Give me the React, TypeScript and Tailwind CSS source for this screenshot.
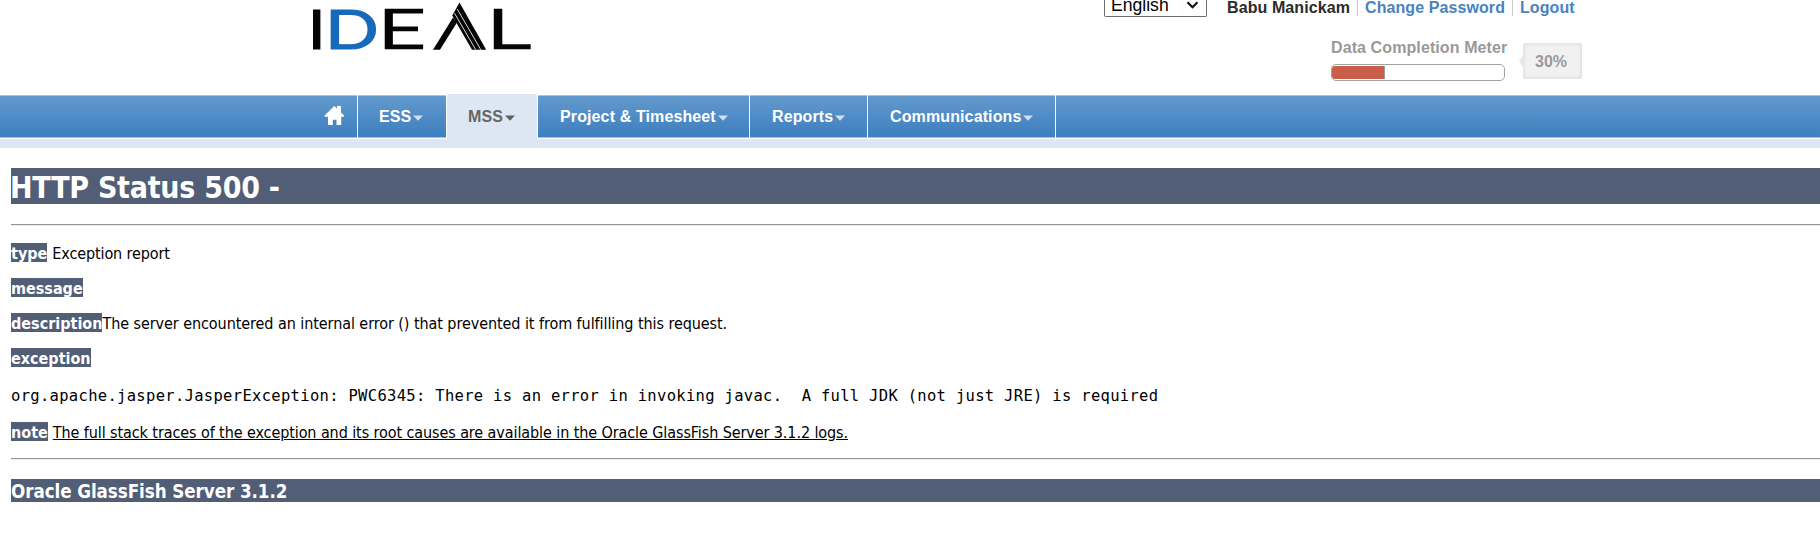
import React from "react";

type NavItem = { label: string; width: string; active?: boolean };

const NAV_ITEMS: NavItem[] = [
  { label: "ESS", width: "w-[89px] pl-[21px]" },
  { label: "MSS", width: "w-[91px] pl-[21px]", active: true },
  { label: "Project & Timesheet", width: "w-[212px] pl-[22px]" },
  { label: "Reports", width: "w-[118px] pl-[22px]" },
  { label: "Communications", width: "w-[188px] pl-[22px]" },
];

const TAHOMA = "font-['DejaVu_Sans_Condensed','DejaVu_Sans',sans-serif] [font-stretch:condensed]";

function Logo() {
  return (
    <svg width="230" height="56" viewBox="0 0 230 56" role="img" aria-label="IDEAL" className="block overflow-visible">
      <g fontFamily="Lato, sans-serif" fontSize="54.5" fill="#050505" stroke="#050505" strokeWidth="1.2">
        <text transform="translate(-2.1 49.1) scale(1.14 1)">I</text>
        <text transform="translate(14.9 49.1) scale(1.296 1)" fill="#1769b9" stroke="#1769b9">D</text>
        <text transform="translate(68.3 48.4) scale(1.53 1)" fontSize="53" fontWeight="300" strokeWidth="2.6">E</text>
        <text transform="translate(176.9 48.4) scale(1.6 1)" fontSize="53" fontWeight="300" strokeWidth="2.6">L</text>
      </g>
      <path d="M123 49.7 143 17.5 147 22.5 130 49.7Z" fill="#050505" />
      <path d="M149.5 2.5 176.2 49.7H162L142.2 15.5Z" fill="#050505" />
      <path d="M147.2 9 170.8 49.7M144.5 13.2 165.7 49.7" stroke="#d8d8d8" strokeWidth="1" fill="none" />
    </svg>
  );
}

function HomeIcon() {
  return (
    <svg width="21" height="20" viewBox="0 0 21 20" className="block" fill="#fff">
      <path d="M10.3 1 13 3.6V1h4v6.4l3.3 3.3-.6 1h-2.5V20h-4.7v-5.2H8.8V20H4v-8.3H1L.4 10.8Z" />
    </svg>
  );
}

function Caret({ active }: { active?: boolean }) {
  return (
    <svg width="10" height="6" viewBox="0 0 10 6" className="mt-[2px] ml-[2px] block shrink-0">
      <path d="M0 .5h10L5 5.7Z" fill={active ? "#5f5f5f" : "#cfe0f1"} />
    </svg>
  );
}

function Header() {
  return (
    <header className="flex h-[94px] pl-[310px] font-['Liberation_Sans',Arial,sans-serif]">
      <Logo />
      <div className="ml-[564px] flex w-[480px] flex-col">
        <div className="flex h-[18px] items-start">
          <div className="flex h-[17px] w-[103px] shrink-0 items-start justify-between rounded-b-[2px] border border-t-0 border-[#6d6d6d] pr-[7px] pl-[6px] text-[17.6px] leading-[20px] text-black">
            <span className="-mt-[5px]">English</span>
            <svg width="13" height="8" viewBox="0 0 13 8" className="mt-[1px]">
              <path d="M1.5 1.3 6.5 6.2 11.5 1.3" fill="none" stroke="#111" strokeWidth="2.2" />
            </svg>
          </div>
          <div className="ml-[20px] flex text-[16px] leading-[16px] font-bold tracking-[0.09px] whitespace-nowrap text-[#4a82bd]">
            <span className="w-[131px] border-r border-[#c9c9c9] text-[#2b2b2b]">Babu Manickam</span>
            <span className="w-[155px] border-r border-[#c9c9c9] pl-[7px]">Change Password</span>
            <span className="pl-[7px]">Logout</span>
          </div>
        </div>
        <div className="mt-[20px] flex pl-[227px] font-bold text-[#999]">
          <div className="w-[174px]">
            <div className="text-[16px] leading-[20px] tracking-[0.1px] whitespace-nowrap">Data Completion Meter</div>
            <div className="mt-[6px] h-[17px] w-[174px] overflow-hidden rounded-[5px] border border-[#a3a3a3] py-px">
              <div className="h-full w-[53px] rounded-l-[3px] border-r border-[#9a9a9a] bg-[#cb5e4b]" />
            </div>
          </div>
          <div className="mt-[5px] ml-[14px] flex h-[36px] items-center">
            <svg width="4" height="12" viewBox="0 0 4 12">
              <path d="M4 0V12L0 6Z" fill="#e6e7e7" />
            </svg>
            <div className="flex h-[36px] w-[59px] items-center justify-center rounded-[2px] bg-[#f1f1f1] pt-px pr-[3px] text-[16px] shadow-[inset_0_0_4px_#cfd2d3]">
              30%
            </div>
          </div>
        </div>
      </div>
    </header>
  );
}

function NavBar() {
  return (
    <nav className="h-[54px] bg-[linear-gradient(to_bottom,transparent_0_1px,#a9c6e0_1px_2px,#6199cd_2px,#3e7fbf_43px,#a9bfd8_43px_44px,#f8fbff_44px_45px,#dde7f3_45px)] font-['Liberation_Sans',Arial,sans-serif] text-[16px] font-bold">
      <div className="flex h-[46px] pl-[324px]">
        <div className="mt-px w-[34px] border-r border-white pt-[10px]">
          <HomeIcon />
        </div>
        {NAV_ITEMS.map(({ label, width, active }) => (
          <div
            key={label}
            className={`flex items-center border-r border-white ${width} ${
              active ? "bg-[#dde7f3] text-[#666]" : "mt-px pb-px text-white"
            }`}
          >
            <span className="tracking-[0.12px] whitespace-nowrap">{label}</span>
            <Caret active={active} />
          </div>
        ))}
      </div>
    </nav>
  );
}

function Label({ children }: { children: string }) {
  return <b className="block h-[19px] bg-[#525d76] tracking-normal text-white">{children}</b>;
}

function ErrorReport() {
  return (
    <main className={`ml-[11px] pt-[20px] text-[16px] leading-[21px] tracking-[-0.08px] text-black ${TAHOMA}`}>
      <h1 className="h-[36px] bg-[#525d76] indent-[-1px] text-[30px] leading-[39px] font-bold tracking-[-0.27px] text-white">
        HTTP Status 500 -
      </h1>
      <hr className="mt-[20px] h-[2px] border-t border-b border-t-[#959595] border-b-[#ececec]" />
      <div className="mt-[17px] flex flex-col gap-[16px] whitespace-nowrap">
        <p className="flex h-[19px] gap-[5px]">
          <Label>type</Label>
          <span className="tracking-[-0.12px]">Exception report</span>
        </p>
        <p className="flex h-[19px]">
          <Label>message</Label>
        </p>
        <p className="flex h-[19px]">
          <Label>description</Label>
          <span className="tracking-[-0.07px]">
            The server encountered an internal error () that prevented it from fulfilling this request.
          </span>
        </p>
        <p className="flex h-[19px]">
          <Label>exception</Label>
        </p>
      </div>
      <pre className="mt-[18px] h-[20px] font-['DejaVu_Sans_Mono',monospace] text-[15.5px] leading-[22px] tracking-[0.31px] [font-stretch:normal]">
        {"org.apache.jasper.JasperException: PWC6345: There is an error in invoking javac.  A full JDK (not just JRE) is required"}
      </pre>
      <p className="mt-[17px] flex h-[19px] gap-[5px] whitespace-nowrap">
        <Label>note</Label>
        <u className="tracking-[-0.09px] underline-offset-[1px]">
          The full stack traces of the exception and its root causes are available in the Oracle GlassFish Server 3.1.2 logs.
        </u>
      </p>
      <hr className="mt-[17px] h-[2px] border-t border-b border-t-[#959595] border-b-[#ececec]" />
      <h3 className="mt-[19px] h-[23px] bg-[#525d76] text-[18.67px] leading-[25px] font-bold tracking-[-0.08px] text-white">
        Oracle GlassFish Server 3.1.2
      </h3>
    </main>
  );
}

export default function App() {
  return (
    <div className="h-[557px] w-full overflow-hidden bg-white">
      <Header />
      <NavBar />
      <ErrorReport />
    </div>
  );
}
